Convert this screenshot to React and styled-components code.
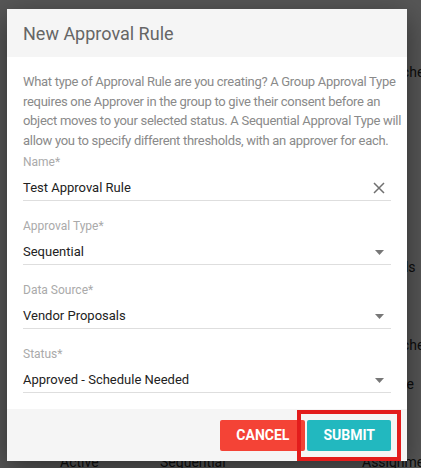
import React from "react";
import styled, { createGlobalStyle } from "styled-components";

const GlobalStyle = createGlobalStyle`
  html, body {
    margin: 0;
    padding: 0;
    width: 421px;
    height: 468px;
    overflow: hidden;
    font-family: Roboto, "Liberation Sans", sans-serif;
  }
`;

const Screen = styled.div`
  position: relative;
  width: 421px;
  height: 468px;
  overflow: hidden;
  background: #fff;
`;

/* underlying list page, dimmed by the overlay */
const Page = styled.div`
  padding: 52px 0 0 60px;
  display: flex;
  flex-direction: column;
`;

const PageRow = styled.div`
  display: grid;
  grid-template-columns: 100px 202px auto;
  height: 39px;
  align-items: center;
  font-size: 14px;
  color: #2a2a2a;
  white-space: nowrap;
`;

const Overlay = styled.div`
  position: absolute;
  inset: 0;
  background: rgba(0, 0, 0, 0.66);
`;

const Modal = styled.div`
  position: absolute;
  top: 9px;
  left: 7px;
  width: 400px;
  background: #fff;
  box-shadow: 0 8px 28px rgba(0, 0, 0, 0.45);
  display: flex;
  flex-direction: column;
`;

const Header = styled.div`
  height: 48px;
  background: #f5f5f5;
  display: flex;
  align-items: center;
  padding: 0 16px;
`;

const Title = styled.h2`
  margin: 0;
  font-size: 18px;
  font-weight: 400;
  color: #666;
`;

const Body = styled.div`
  padding: 15px 16px 16px;
  display: flex;
  flex-direction: column;
  gap: 17px;
`;

const Description = styled.p`
  margin: 0 0 -13px;
  font-size: 13px;
  letter-spacing: -0.3px;
  line-height: 19.5px;
  color: #8a8a8a;
`;

const Line = styled.span`
  display: block;
  white-space: nowrap;
`;

const Field = styled.div`
  display: flex;
  flex-direction: column;
`;

const Label = styled.div`
  font-size: 12px;
  line-height: 16px;
  color: #aaa;
`;

const Control = styled.div`
  display: flex;
  align-items: center;
  justify-content: space-between;
  padding: 10px 0 4px;
  border-bottom: 1px solid #dedede;
`;

const Value = styled.span`
  font-size: 13px;
  line-height: 16px;
  color: #222;
`;

const IconSlot = styled.span`
  width: 16px;
  height: 16px;
  margin-right: 4px;
  display: flex;
  align-items: center;
  justify-content: center;
`;

const Footer = styled.div`
  height: 52px;
  background: #f5f5f5;
  display: flex;
  justify-content: flex-end;
  align-items: center;
  gap: 2px;
  padding: 0 16px;
`;

const Button = styled.button`
  height: 31px;
  padding: 0 16px;
  border: none;
  border-radius: 2px;
  background: ${({ $tone }) => ($tone === "danger" ? "#f44336" : "#22b8bf")};
  color: #fff;
  font-family: Roboto, "Liberation Sans", sans-serif;
  font-size: 14px;
  font-weight: 700;
  text-transform: uppercase;
  min-width: ${({ $w }) => $w}px;
`;

const Highlight = styled.span`
  position: relative;
  display: inline-flex;

  &::after {
    content: "";
    position: absolute;
    top: -10px;
    bottom: -10px;
    left: -10px;
    right: -10px;
    border: 4px solid #e31c1c;
    pointer-events: none;
  }
`;

const ClearIcon = () => (
  <svg width="12" height="12" viewBox="0 0 12 12">
    <path d="M1 1L11 11M11 1L1 11" stroke="#707070" strokeWidth="1.5" />
  </svg>
);

const Caret = () => (
  <svg width="9" height="5" viewBox="0 0 9 5">
    <path d="M0 0H9L4.5 5Z" fill="#777" />
  </svg>
);

const rows = [
  ["", "", "Dispatcher"],
  ["", "", ""],
  ["", "", ""],
  ["", "", ""],
  ["", "", ""],
  ["", "", "Manuals"],
  ["", "", ""],
  ["", "", "Dispatcher"],
  ["", "", "Override"],
  ["", "", ""],
  ["Active", "Sequential", "Assignment"],
];

const fields = [
  { label: "Name*", value: "Test Approval Rule", icon: <ClearIcon /> },
  { label: "Approval Type*", value: "Sequential", icon: <Caret /> },
  { label: "Data Source*", value: "Vendor Proposals", icon: <Caret /> },
  { label: "Status*", value: "Approved - Schedule Needed", icon: <Caret /> },
];

const description = [
  "What type of Approval Rule are you creating? A Group Approval Type",
  "requires one Approver in the group to give their consent before an",
  "object moves to your selected status. A Sequential Approval Type will",
  "allow you to specify different thresholds, with an approver for each.",
];

export default function App() {
  return (
    <>
      <GlobalStyle />
      <Screen>
        <Page>
          {rows.map((r, i) => (
            <PageRow key={i}>
              <span>{r[0]}</span>
              <span>{r[1]}</span>
              <span>{r[2]}</span>
            </PageRow>
          ))}
        </Page>
        <Overlay />
        <Modal>
          <Header>
            <Title>New Approval Rule</Title>
          </Header>
          <Body>
            <Description>
              {description.map((l) => (
                <Line key={l}>{l}</Line>
              ))}
            </Description>
            {fields.map((f) => (
              <Field key={f.label}>
                <Label>{f.label}</Label>
                <Control>
                  <Value>{f.value}</Value>
                  <IconSlot>{f.icon}</IconSlot>
                </Control>
              </Field>
            ))}
          </Body>
          <Footer>
            <Button $tone="danger" $w={85}>Cancel</Button>
            <Highlight>
              <Button $w={83}>Submit</Button>
            </Highlight>
          </Footer>
        </Modal>
      </Screen>
    </>
  );
}
